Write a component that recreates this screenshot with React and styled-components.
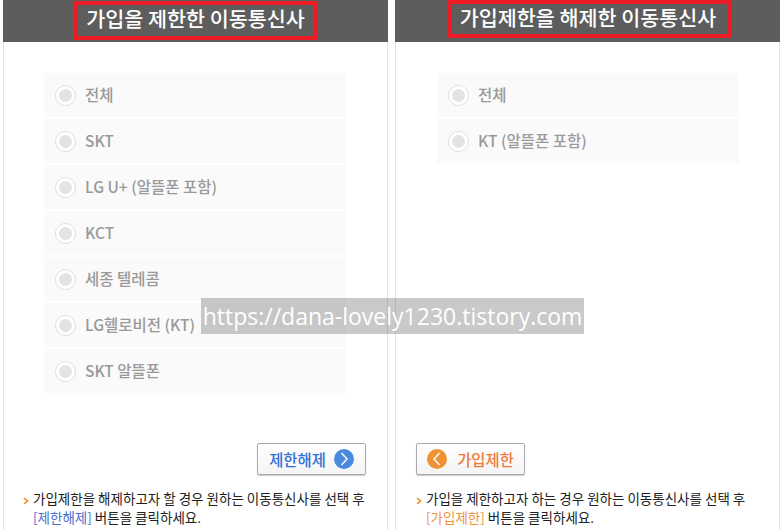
import React from "react";
import styled, { createGlobalStyle } from "styled-components";

const leftItems = ["전체", "SKT", "LG U+ (알뜰폰 포함)", "KCT", "세종 텔레콤", "LG헬로비전 (KT)", "SKT 알뜰폰"];
const rightItems = ["전체", "KT (알뜰폰 포함)"];

const FONT = `"Noto Sans CJK KR", "Noto Sans", sans-serif`;

const App = () => {
  return (
    <Page>
      <GlobalStyle />
      <Panel>
        <Header>
          <HeaderTitle>가입을 제한한 이동통신사</HeaderTitle>
        </Header>
        <Body $side="left">
          <List>
            {leftItems.map((item) => (
              <Row key={item}>
                <Radio />
                <Label>{item}</Label>
              </Row>
            ))}
          </List>
          <ButtonRow $side="left">
            <Button $color="#2f6fd6" $gap="8px">
              제한해제
              <Circle $bg="#4a8ade">
                <Chevron points="6.5,4 12,10 6.5,16" />
              </Circle>
            </Button>
          </ButtonRow>
          <Note>
            <Arrow>
              <svg width="6" height="8" viewBox="0 0 6 8">
                <polyline points="1,1 4.5,4 1,7" fill="none" stroke="#f08a1d" strokeWidth="1.6" />
              </svg>
            </Arrow>
            가입제한을 해제하고자 할 경우 원하는 이동통신사를 선택 후
            <br />
            <Link $color="#4a6fd0">[제한해제]</Link> 버튼을 클릭하세요.
          </Note>
        </Body>
      </Panel>
      <Panel>
        <Header>
          <HeaderTitle $wide>가입제한을 해제한 이동통신사</HeaderTitle>
        </Header>
        <Body $side="right">
          <List>
            {rightItems.map((item) => (
              <Row key={item}>
                <Radio />
                <Label>{item}</Label>
              </Row>
            ))}
          </List>
          <ButtonRow $side="right">
            <Button $color="#f0793a" $gap="10px">
              <Circle $bg="#ee9233">
                <Chevron points="11.5,4 6,10 11.5,16" />
              </Circle>
              가입제한
            </Button>
          </ButtonRow>
          <Note>
            <Arrow>
              <svg width="6" height="8" viewBox="0 0 6 8">
                <polyline points="1,1 4.5,4 1,7" fill="none" stroke="#f08a1d" strokeWidth="1.6" />
              </svg>
            </Arrow>
            가입을 제한하고자 하는 경우 원하는 이동통신사를 선택 후
            <br />
            <Link $color="#f0933f">[가입제한]</Link> 버튼을 클릭하세요.
          </Note>
        </Body>
      </Panel>
      <Watermark>https://dana-lovely1230.tistory.com</Watermark>
    </Page>
  );
};

export default App;

const Chevron = ({ points }) => (
  <svg width="18" height="20" viewBox="0 0 18 20">
    <polyline points={points} fill="none" stroke="#fff" strokeWidth="1.4" />
  </svg>
);

const GlobalStyle = createGlobalStyle`
  html, body {
    margin: 0;
    padding: 0;
    background: #fff;
    overflow: hidden;
  }
`;

const Page = styled.div`
  position: relative;
  width: 784px;
  height: 530px;
  overflow: hidden;
  display: flex;
  gap: 7px;
  padding-left: 3px;
  box-sizing: border-box;
  font-family: ${FONT};
`;

const Panel = styled.section`
  width: 385px;
  height: 530px;
  box-sizing: border-box;
  border-left: 1px solid #e2e2e2;
  border-right: 1px solid #e2e2e2;
`;

const Header = styled.header`
  height: 42px;
  margin: 0 -1px;
  background: #5d5d5d;
  display: flex;
  justify-content: center;
  align-items: flex-start;
`;

const HeaderTitle = styled.h2`
  margin: ${(p) => (p.$wide ? "0 0 0 4px" : "1px 0 0")};
  height: ${(p) => (p.$wide ? "38px" : "39px")};
  box-sizing: border-box;
  padding: ${(p) => (p.$wide ? "0 11px 0 8px" : "0 8px")};
  border: 4px solid #ed1c24;
  color: #fff;
  font-size: 20.7px;
  line-height: 27px;
  font-weight: 500;
  white-space: nowrap;
`;

const Body = styled.div`
  height: 488px;
  box-sizing: border-box;
  padding: 31px 0 0 ${(p) => (p.$side === "left" ? "40px" : "41px")};
  display: flex;
  flex-direction: column;
`;

const List = styled.ul`
  list-style: none;
  margin: 0;
  padding: 0;
  height: 370px;
  display: flex;
  flex-direction: column;
  gap: 2px;
`;

const Row = styled.li`
  width: 302px;
  height: 44px;
  box-sizing: border-box;
  padding-left: 11px;
  background: #fafafa;
  display: flex;
  align-items: center;
  gap: 9px;
`;

const Radio = styled.span`
  width: 21px;
  height: 21px;
  box-sizing: border-box;
  border: 1px solid #dedede;
  border-radius: 50%;
  background: #fff;
  display: flex;
  align-items: center;
  justify-content: center;

  &::after {
    content: "";
    width: 13px;
    height: 13px;
    border-radius: 50%;
    background: #e3e3e3;
  }
`;

const Label = styled.span`
  color: #999;
  font-size: 15.5px;
  line-height: 20px;
  margin-top: -2px;
  font-weight: 500;
`;

const ButtonRow = styled.div`
  display: flex;
  justify-content: ${(p) => (p.$side === "left" ? "flex-end" : "flex-start")};
  width: ${(p) => (p.$side === "left" ? "322px" : "109px")};
  margin-left: ${(p) => (p.$side === "left" ? "0" : "-21px")};
`;

const Button = styled.button`
  width: 109px;
  height: 32px;
  padding: 0;
  border: 1px solid #aaa;
  border-radius: 2px;
  background: linear-gradient(#fff, #f4f4f4);
  box-shadow: 0 1px 1px #ccc;
  color: ${(p) => p.$color};
  font-family: inherit;
  font-size: 15.4px;
  font-weight: 500;
  display: flex;
  align-items: center;
  justify-content: center;
  gap: ${(p) => p.$gap};
`;

const Circle = styled.span`
  width: 20px;
  height: 20px;
  border-radius: 50%;
  background: ${(p) => p.$bg};
  display: flex;
  align-items: center;
  justify-content: center;
`;

const Note = styled.p`
  position: relative;
  margin: 14px 0 0 -21px;
  padding-left: 10px;
  color: #222;
  font-size: 13.5px;
  line-height: 19px;
  white-space: nowrap;
`;

const Arrow = styled.span`
  position: absolute;
  left: 0;
  top: 1px;
`;

const Link = styled.span`
  color: ${(p) => p.$color};
`;

const Watermark = styled.div`
  position: absolute;
  left: 201px;
  top: 298px;
  width: 383px;
  height: 36px;
  background: rgba(120, 120, 120, 0.4);
  color: #fff;
  font-family: "Open Sans", sans-serif;
  font-size: 23px;
  line-height: 36px;
  text-align: center;
  white-space: nowrap;
`;
